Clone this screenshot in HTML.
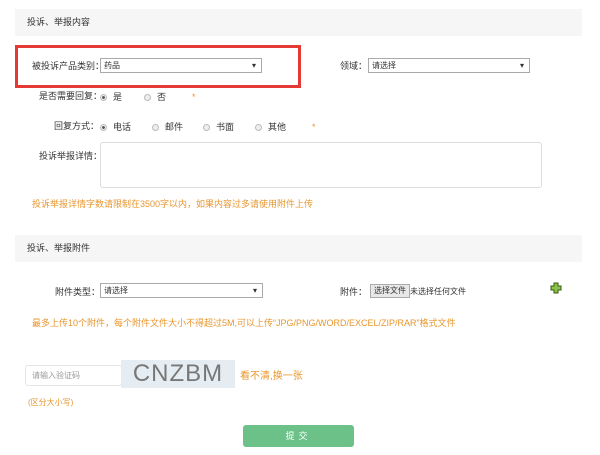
<!DOCTYPE html>
<html><head><meta charset="utf-8"><style>
*{margin:0;padding:0;box-sizing:border-box}
body{width:600px;height:455px;background:#fff;font-family:"Liberation Sans","Noto Sans CJK SC",sans-serif;font-size:9px;color:#333;position:relative;overflow:hidden}
.a{position:absolute;white-space:nowrap}
.bar{position:absolute;left:15px;width:567px;height:27px;background:#f6f6f6;font-size:9px;line-height:27px;padding-left:12px;color:#333}
.sel{position:absolute;height:15px;border:1px solid #aaa;background:#fff;font-size:8px;line-height:13px;padding-left:3px}
.sel:after{content:"▾";position:absolute;right:5px;top:0;font-size:8px}
.r{display:inline-block;width:7px;height:7px;border-radius:50%;border:1px solid #bbb;background:#eee;vertical-align:-1px;margin-right:6px}
.r.on{background:radial-gradient(#555 35%,#eee 45%)}
.or{color:#e8962e}
</style></head><body>
<div class="bar" style="top:9px">投诉、举报内容</div>
<div class="a" style="left:15px;top:45px;width:286px;height:43px;border:3px solid #e53935"></div>
<div class="a" style="left:32px;top:59px">被投诉产品类别：</div>
<div class="sel" style="left:100px;top:58px;width:162px">药品</div>
<div class="a" style="left:340px;top:59px">领域：</div>
<div class="sel" style="left:368px;top:58px;width:162px">请选择</div>
<div class="a" style="left:39px;top:89px">是否需要回复：</div>
<div class="a" style="left:100px;top:90px"><span class="r on"></span>是</div>
<div class="a" style="left:144px;top:90px"><span class="r"></span>否</div>
<div class="a or" style="left:192px;top:92px">*</div>
<div class="a" style="left:54px;top:119px">回复方式：</div>
<div class="a" style="left:100px;top:120px"><span class="r on"></span>电话</div>
<div class="a" style="left:152px;top:120px"><span class="r"></span>邮件</div>
<div class="a" style="left:203px;top:120px"><span class="r"></span>书面</div>
<div class="a" style="left:255px;top:120px"><span class="r"></span>其他</div>
<div class="a or" style="left:312px;top:122px">*</div>
<div class="a" style="left:39px;top:149px">投诉举报详情：</div>
<div class="a" style="left:100px;top:142px;width:442px;height:46px;border:1px solid #ddd;border-radius:3px"></div>
<div class="a or" style="left:32px;top:197px">投诉举报详情字数请限制在3500字以内，如果内容过多请使用附件上传</div>
<div class="bar" style="top:235px">投诉、举报附件</div>
<div class="a" style="left:55px;top:285px">附件类型：</div>
<div class="sel" style="left:100px;top:283px;width:163px">请选择</div>
<div class="a" style="left:340px;top:285px">附件：</div>
<div class="a" style="left:370px;top:284px;height:14px;padding:0 3px;border:1px solid #aaa;background:#e8e8e8;font-size:8px;line-height:12px">选择文件</div>
<div class="a" style="left:410px;top:286px;font-size:8px">未选择任何文件</div>
<svg class="a" style="left:550px;top:282px" width="12" height="12"><path d="M4 1h4v3h3v4H8v3H4V8H1V4h3z" fill="#8bc34a" stroke="#3a5a10" stroke-width="1"/></svg>
<div class="a or" style="left:32px;top:316px">最多上传10个附件，每个附件文件大小不得超过5M,可以上传“JPG/PNG/WORD/EXCEL/ZIP/RAR”格式文件</div>
<div class="a" style="left:25px;top:365px;width:97px;height:21px;border:1px solid #e5e5e5;border-radius:3px;color:#999;font-size:8px;line-height:19px;padding-left:6px">请输入验证码</div>
<div class="a" style="left:121px;top:360px;width:114px;height:28px;background:#e6edf2;color:#777;font-family:'Liberation Sans',sans-serif;font-size:24px;line-height:28px;letter-spacing:1px;text-align:center;overflow:hidden;font-weight:normal">CNZBM</div>
<div class="a or" style="left:240px;top:367px;font-size:10px">看不清,换一张</div>
<div class="a or" style="left:28px;top:397px;font-size:8px">(区分大小写)</div>
<div class="a" style="left:243px;top:425px;width:111px;height:22px;background:#6cc189;border-radius:3px;color:#fff;text-align:center;line-height:22px;letter-spacing:4px">提交</div>
</body></html>
